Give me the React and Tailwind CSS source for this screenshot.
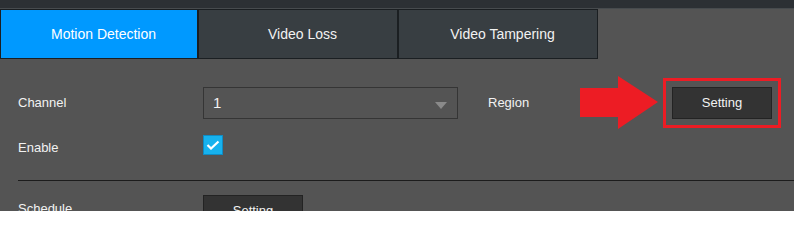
import { useState } from 'react'

const font = { fontFamily: '"Liberation Sans", Arial, sans-serif' }

const tabs = ['Motion Detection', 'Video Loss', 'Video Tampering']

function Tab({ label, active, w }) {
  return (
    <div
      className={`flex items-center justify-center h-[50px] pl-[9px] border text-[14px] ${w} ${
        active ? 'bg-[#0099ff] border-[#1b1f22] text-white' : 'bg-[#383e42] border-[#1b1f22] text-[#f2f2f2]'
      }`}
    >
      {label}
    </div>
  )
}

function Arrow() {
  return (
    <svg width="80" height="54" viewBox="0 0 80 54" className="shrink-0">
      <polygon points="0,12 38,12 38,0 78,26 38,53 38,41 0,41" fill="#ed1c24" />
    </svg>
  )
}

function Btn({ children }) {
  return (
    <button className="w-[100px] h-[32px] bg-[#333333] border border-[#232323] text-[13px] text-[#f2f2f2]">
      {children}
    </button>
  )
}

export default function App() {
  const [enabled, setEnabled] = useState(true)

  return (
    <div className="w-[794px] h-[211px] overflow-hidden bg-[#545454] text-[13px] leading-[16px] text-[#f2f2f2]" style={font}>
      <div className="h-[8px] bg-[#2c3034]" />
      <div className="h-[1px] bg-[#474b4e]" />
      <div className="flex">
        <Tab label={tabs[0]} active w="w-[198px]" />
        <Tab label={tabs[1]} w="w-[200px]" />
        <Tab label={tabs[2]} w="w-[200px]" />
      </div>

      <div className="pl-[18px] pt-[28px]">
        {/* Channel / Region */}
        <div className="flex items-center h-[32px]">
          <div className="w-[185px]">Channel</div>
          <div className="relative w-[255px] h-[32px] border border-[#353535] flex items-center pl-[9px] text-[15px]">
            1
            <div className="absolute right-[10px] top-[14px] w-0 h-0 border-l-[6px] border-r-[6px] border-t-[7px] border-l-transparent border-r-transparent border-t-[#8a8a8a]" />
          </div>
          <div className="ml-[30px] w-[92px]">Region</div>
          <Arrow />
          <div className="ml-[3px] border-[3px] border-[#ed1c24] px-[6px] py-[6px] -my-[9px]">
            <Btn>Setting</Btn>
          </div>
        </div>

        {/* Enable */}
        <div className="flex items-start h-[21px] mt-[16px]">
          <div className="w-[185px] pt-[5px]">Enable</div>
          <button
            onClick={() => setEnabled(e => !e)}
            className="w-[20px] h-[20px] bg-[#17b2ee] border border-[#0f8cc4] flex items-center justify-center"
          >
            {enabled && (
              <svg width="14" height="10" viewBox="0 0 14 10">
                <polyline points="1.5,5 5,8.5 12.5,1.5" fill="none" stroke="white" strokeWidth="2.2" />
              </svg>
            )}
          </button>
        </div>

        <div className="h-[1px] bg-[#1c1c1c] mt-[24px]" />

        {/* Schedule */}
        <div className="flex items-start mt-[14px]">
          <div className="w-[185px] pt-[6px]">Schedule</div>
          <Btn>Setting</Btn>
        </div>
      </div>
    </div>
  )
}
